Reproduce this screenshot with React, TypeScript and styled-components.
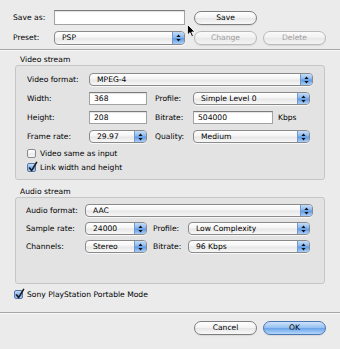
import React from "react";
import styled, { createGlobalStyle } from "styled-components";

const Global = createGlobalStyle`
  html, body { margin: 0; padding: 0; background: #ebebeb; }
  body {
    font-family: "DejaVu Sans", "Liberation Sans", sans-serif;
    font-size: 7.6px;
    color: #000;
  }
`;

const Window = styled.div`
  position: relative;
  width: 340px;
  height: 349px;
  box-sizing: border-box;
  background: #ebebeb;
  display: flex;
  flex-direction: column;
  overflow: hidden;
`;

const TopGrid = styled.div`
  display: grid;
  grid-template-columns: 35px 131px 66px 63px;
  grid-template-rows: 15px 15px;
  column-gap: 6px;
  row-gap: 5px;
  padding: 10px 0 0 13px;
  align-items: center;
`;

const Label = styled.span<{ $pl?: number }>`
  white-space: nowrap;
  padding-left: ${(p) => p.$pl ?? 0}px;
  line-height: 13px;
`;

const Separator = styled.div<{ $mt: number }>`
  margin-top: ${(p) => p.$mt}px;
  height: 1px;
  background: #a6a6a6;
  border-bottom: 1px solid #f8f8f8;
`;

const SectionTitle = styled.div<{ $mt: number }>`
  margin-top: ${(p) => p.$mt}px;
  padding-left: 20px;
  line-height: 10px;
  height: 10px;
`;

const Group = styled.div<{ $pt: number; $pb: number; $pl: number }>`
  margin: 0 15px;
  box-sizing: border-box;
  background: #e3e3e3;
  border: 1px solid #c6c6c6;
  border-radius: 3px;
  padding: ${(p) => p.$pt}px 0 ${(p) => p.$pb}px ${(p) => p.$pl}px;
`;

const FormGrid = styled.div<{ $cols: string; $gap: number }>`
  display: grid;
  grid-template-columns: ${(p) => p.$cols};
  grid-auto-rows: 13px;
  row-gap: ${(p) => p.$gap}px;
  align-items: center;
`;

const Wide = styled.div<{ $extra: number }>`
  grid-column: 2 / -1;
  width: calc(100% + ${(p) => p.$extra}px);
  height: 100%;
`;

const PopupBox = styled.div<{ $h?: number }>`
  height: ${(p) => p.$h ?? 13}px;
  width: 100%;
  box-sizing: border-box;
  border: 1px solid #8a8a8a;
  border-radius: 4px;
  background: linear-gradient(#ffffff, #f4f4f4 45%, #e7e7e7 55%, #f8f8f8);
  display: flex;
  align-items: center;
  padding-left: 7px;
  overflow: hidden;
  box-shadow: 0 1px 0 rgba(255, 255, 255, 0.7);
`;

const PopupText = styled.span`
  flex: 1;
  white-space: nowrap;
  line-height: 11px;
`;

const Stepper = styled.div`
  width: 11px;
  height: 100%;
  flex: none;
  background: linear-gradient(#c3ddf9, #86b5ef 48%, #5d98e4 52%, #a9cef7);
  border-left: 1px solid #7397c6;
  display: flex;
  align-items: center;
  justify-content: center;
`;

const Field = styled.div<{ $w?: number; $h?: number }>`
  width: ${(p) => (p.$w ? `${p.$w}px` : "100%")};
  height: ${(p) => p.$h ?? 13}px;
  box-sizing: border-box;
  background: #fff;
  border: 1px solid #a2a2a2;
  border-top-color: #7b7b7b;
  box-shadow: inset 0 1px 1px rgba(0, 0, 0, 0.12);
  padding-left: 4px;
  display: flex;
  align-items: center;
  line-height: 11px;
`;

const InlineRow = styled.div`
  display: flex;
  align-items: center;
  gap: 5px;
  height: 100%;
`;

const PillButton = styled.button<{ $kind?: "normal" | "disabled" | "default" }>`
  width: 63px;
  height: 14px;
  box-sizing: border-box;
  border-radius: 7px;
  padding: 0;
  font: inherit;
  font-size: 7.6px;
  line-height: 12px;
  justify-self: end;
  color: ${(p) => (p.$kind === "disabled" ? "#9d9d9d" : "#000")};
  border: 1px solid
    ${(p) =>
      p.$kind === "disabled" ? "#b9b9b9" : p.$kind === "default" ? "#4c76b2" : "#7e7e7e"};
  background: ${(p) =>
    p.$kind === "default"
      ? "linear-gradient(#cfe3fa, #94c0f2 48%, #6aa4ea 52%, #b4d6fa)"
      : p.$kind === "disabled"
      ? "linear-gradient(#fbfbfb, #f0f0f0 50%, #e8e8e8 52%, #f4f4f4)"
      : "linear-gradient(#ffffff, #f3f3f3 48%, #e6e6e6 52%, #f9f9f9)"};
  box-shadow: 0 1px 1px rgba(0, 0, 0, 0.08);
`;

const CheckRow = styled.div<{ $mt?: number; $pl?: number }>`
  display: flex;
  align-items: center;
  gap: 4px;
  height: 14px;
  margin-top: ${(p) => p.$mt ?? 0}px;
  padding-left: ${(p) => p.$pl ?? 0}px;
  white-space: nowrap;
`;

const Box = styled.div<{ $on: boolean }>`
  position: relative;
  width: 9px;
  height: 9px;
  box-sizing: border-box;
  border: 1px solid ${(p) => (p.$on ? "#5477a8" : "#8a8a8a")};
  border-radius: 2px;
  background: ${(p) =>
    p.$on
      ? "linear-gradient(#c6def8, #86b4ee 50%, #6aa1e8 52%, #b1d2f7)"
      : "linear-gradient(#ffffff, #f0f0f0 50%, #e5e5e5 52%, #fafafa)"};
  flex: none;
`;

const CheckMark = styled.svg`
  position: absolute;
  left: 0px;
  top: -3px;
`;

const ButtonBar = styled.div`
  display: flex;
  justify-content: flex-end;
  gap: 6px;
  padding-right: 14px;
  margin-top: 7px;
`;

const Cursor = styled.svg`
  position: absolute;
  left: 187px;
  top: 24px;
`;

const Arrows = () => (
  <svg width="5" height="8" viewBox="0 0 5 8">
    <path d="M2.5 0.5 L4.6 3 L0.4 3 Z" fill="#111" />
    <path d="M2.5 7.5 L4.6 5 L0.4 5 Z" fill="#111" />
  </svg>
);

const Popup = ({ value, h }: { value: string; h?: number }) => (
  <PopupBox $h={h}>
    <PopupText>{value}</PopupText>
    <Stepper>
      <Arrows />
    </Stepper>
  </PopupBox>
);

const Check = ({ on, label, mt, pl }: { on: boolean; label: string; mt?: number; pl?: number }) => (
  <CheckRow $mt={mt} $pl={pl}>
    <Box $on={on}>
      {on && (
        <CheckMark width="10" height="12" viewBox="0 0 10 12">
          <path d="M1.6 7 L3.6 9.6 L8.6 1.4" fill="none" stroke="#1b1b1b" strokeWidth="1.6" strokeLinecap="round" strokeLinejoin="round" />
        </CheckMark>
      )}
    </Box>
    <span>{label}</span>
  </CheckRow>
);

export default function App() {
  return (
    <>
      <Global />
      <Window>
        <TopGrid>
          <Label>Save as:</Label>
          <Field $h={15} />
          <PillButton>Save</PillButton>
          <span />
          <Label>Preset:</Label>
          <Popup value="PSP" h={14} />
          <PillButton $kind="disabled">Change</PillButton>
          <PillButton $kind="disabled">Delete</PillButton>
        </TopGrid>

        <Separator $mt={4} />

        <SectionTitle $mt={4}>Video stream</SectionTitle>
        <Group $pt={7} $pb={5} $pl={11}>
          <FormGrid $cols="62px 58px 46px 117px" $gap={6}>
            <Label>Video format:</Label>
            <Wide $extra={3}>
              <Popup value="MPEG-4" />
            </Wide>

            <Label>Width:</Label>
            <Field>368</Field>
            <Label $pl={8}>Profile:</Label>
            <Popup value="Simple Level 0" />

            <Label>Height:</Label>
            <Field>208</Field>
            <Label $pl={8}>Bitrate:</Label>
            <InlineRow>
              <Field $w={80}>504000</Field>
              <Label>Kbps</Label>
            </InlineRow>

            <Label>Frame rate:</Label>
            <Popup value="29.97" />
            <Label $pl={8}>Quality:</Label>
            <Popup value="Medium" />
          </FormGrid>
          <Check on={false} label="Video same as input" mt={3} />
          <Check on={true} label="Link width and height" />
        </Group>

        <SectionTitle $mt={7}>Audio stream</SectionTitle>
        <Group $pt={6} $pb={30} $pl={10}>
          <FormGrid $cols="59px 62px 41px 122px" $gap={5}>
            <Label>Audio format:</Label>
            <Wide $extra={3}>
              <Popup value="AAC" />
            </Wide>

            <Label>Sample rate:</Label>
            <Popup value="24000" />
            <Label $pl={6}>Profile:</Label>
            <Popup value="Low Complexity" />

            <Label>Channels:</Label>
            <Popup value="Stereo" />
            <Label $pl={6}>Bitrate:</Label>
            <Popup value="96 Kbps" />
          </FormGrid>
        </Group>

        <Check on={true} label="Sony PlayStation Portable Mode" mt={3} pl={14} />

        <Separator $mt={11} />

        <ButtonBar>
          <PillButton>Cancel</PillButton>
          <PillButton $kind="default">OK</PillButton>
        </ButtonBar>

        <Cursor width="9" height="14" viewBox="0 0 9 14">
          <path d="M0.5 0.5 L0.5 11 L3 8.6 L4.8 12.8 L6.4 12.1 L4.7 8 L8 8 Z" fill="#000" stroke="#fff" strokeWidth="0.8" strokeLinejoin="round" />
        </Cursor>
      </Window>
    </>
  );
}
